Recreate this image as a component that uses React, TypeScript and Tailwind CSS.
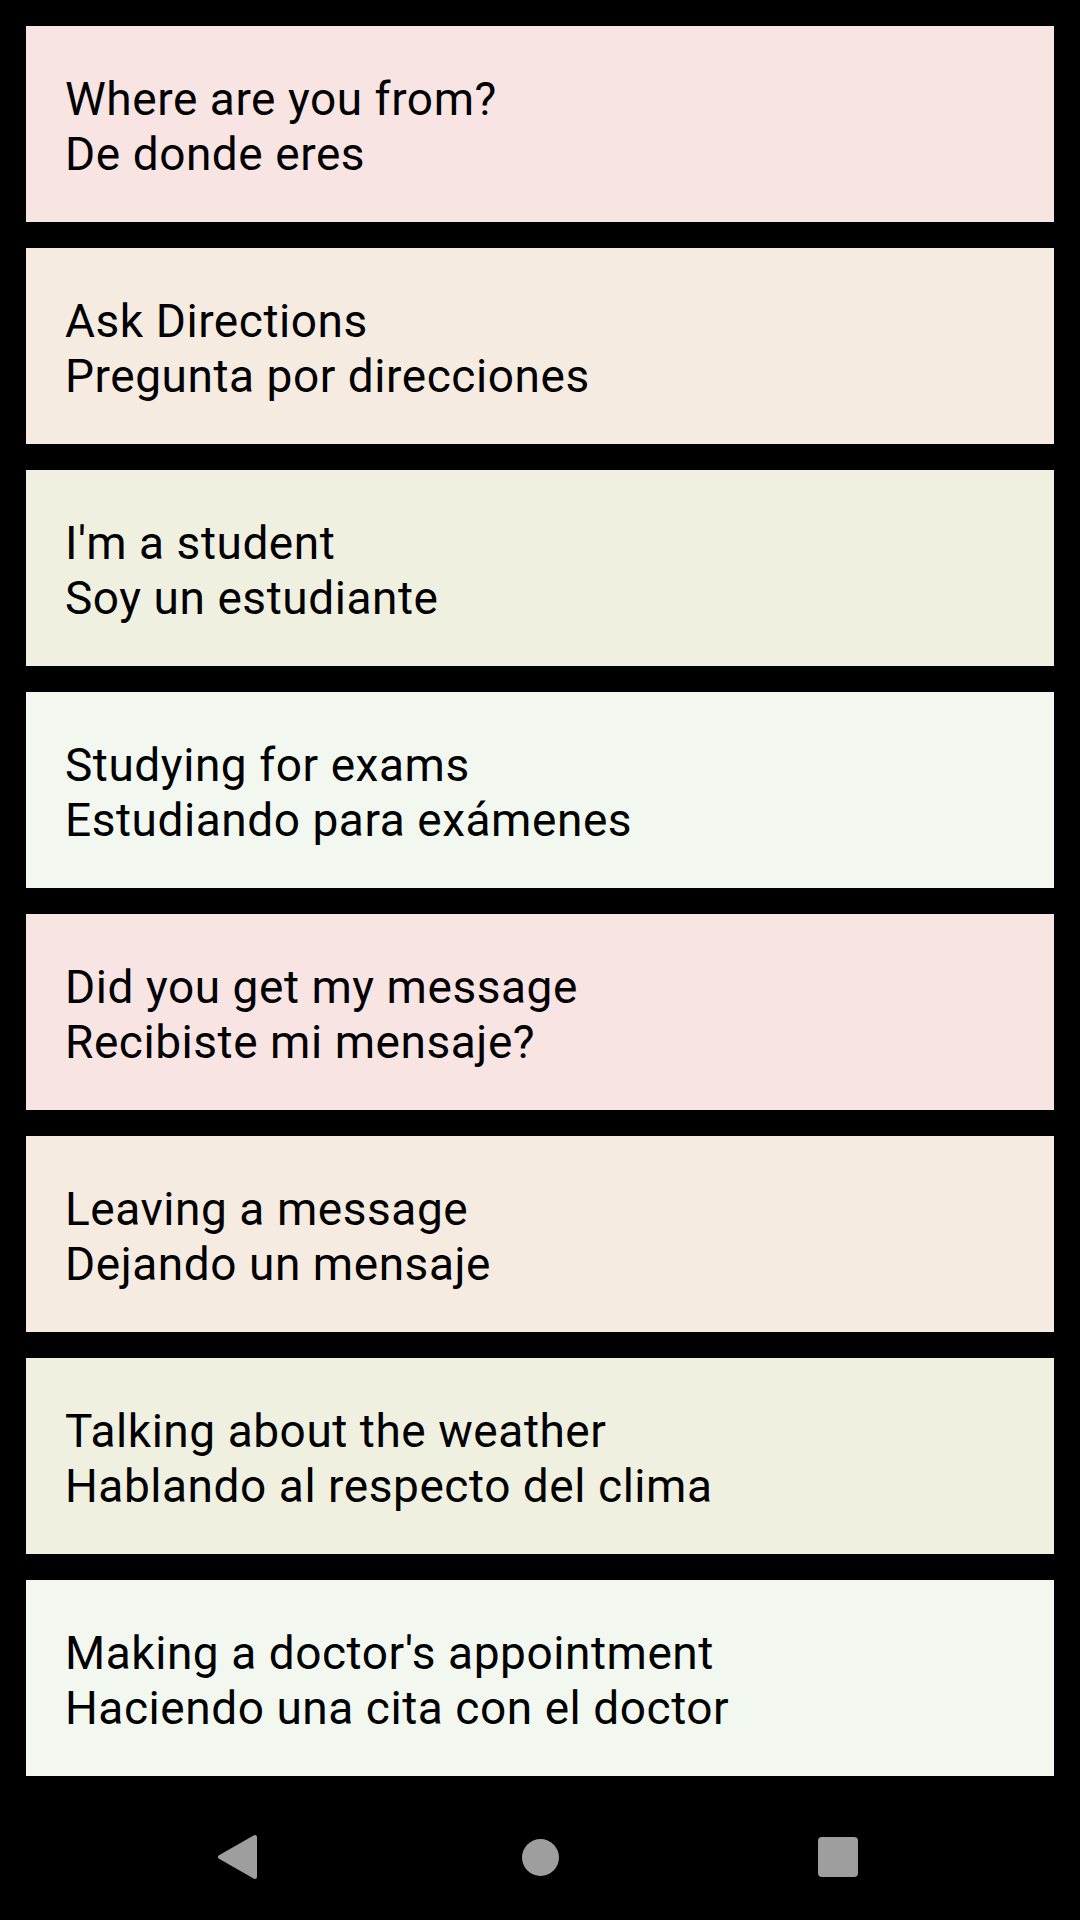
const PHRASES = [
  { en: "Where are you from?", es: "De donde eres", bg: "bg-[#f8e4e3]" },
  { en: "Ask Directions", es: "Pregunta por direcciones", bg: "bg-[#f5ebe0]" },
  { en: "I'm a student", es: "Soy un estudiante", bg: "bg-[#f0f0e0]" },
  { en: "Studying for exams", es: "Estudiando para exámenes", bg: "bg-[#f2f8ef]" },
  { en: "Did you get my message", es: "Recibiste mi mensaje?", bg: "bg-[#f8e4e3]" },
  { en: "Leaving a message", es: "Dejando un mensaje", bg: "bg-[#f5ebe0]" },
  { en: "Talking about the weather", es: "Hablando al respecto del clima", bg: "bg-[#f0f0e0]" },
  { en: "Making a doctor's appointment", es: "Haciendo una cita con el doctor", bg: "bg-[#f2f8ef]" },
];

function PhraseCard({ en, es, bg }: { en: string; es: string; bg: string }) {
  return (
    <div className={`${bg} h-[196px] px-[39px] pt-[46px] text-[46px] leading-[55px] tracking-[0.55px] text-black`}>
      <p>{en}</p>
      <p>{es}</p>
    </div>
  );
}

function NavBar() {
  return (
    <div className="flex h-[126px] items-center justify-center">
      <div className="flex w-[300px] justify-center">
        <svg width="44" height="48" viewBox="0 0 44 48" className="-ml-[6px]">
          <path
            d="M5 24 L40 4 L40 44 Z"
            fill="#9e9e9e"
            stroke="#9e9e9e"
            strokeWidth="4"
            strokeLinejoin="round"
          />
        </svg>
      </div>
      <div className="flex w-[300px] justify-center">
        <div className="h-[37px] w-[37px] rounded-full bg-[#9e9e9e]" />
      </div>
      <div className="flex w-[300px] justify-center">
        <div className="-ml-[4px] h-[40px] w-[40px] rounded-[4px] bg-[#9e9e9e]" />
      </div>
    </div>
  );
}

export default function App() {
  return (
    <div className="flex h-[1920px] w-[1080px] flex-col justify-between bg-black font-['Roboto',sans-serif]">
      <div className="flex flex-col gap-[26px] px-[26px] pt-[26px]">
        {PHRASES.map((p) => (
          <PhraseCard key={p.en} {...p} />
        ))}
      </div>
      <NavBar />
    </div>
  );
}
